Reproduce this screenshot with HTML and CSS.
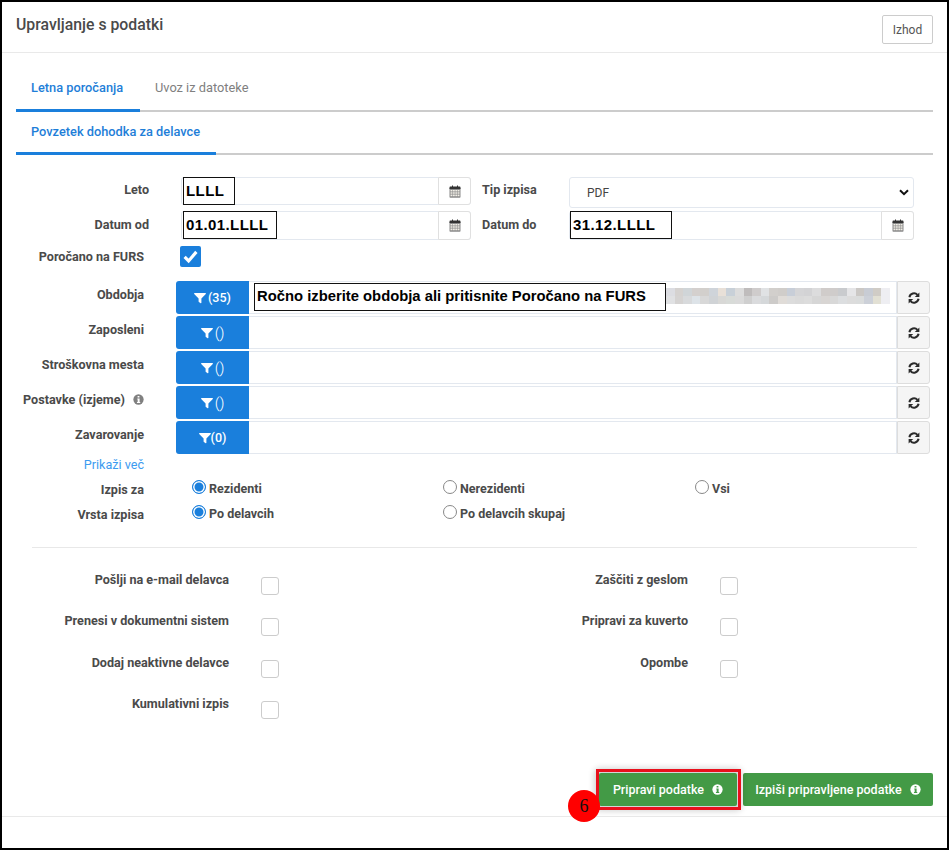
FILE: index.html
```html
<!DOCTYPE html>
<html lang="sl">
<head>
    <meta charset="UTF-8">
    <meta name="viewport" content="width=device-width, initial-scale=1.0">
    <title>Upravljanje s podatki</title>
    <link rel="stylesheet" href="styles.css">
</head>
<body>

    <svg class="icon-defs" width="0" height="0">
        <symbol id="i-cal" viewBox="0 0 12 13">
            <path d="M0.5 3h11v9a.8.8 0 0 1-.8.8H1.3a.8.8 0 0 1-.8-.8z" fill="#8a8a8a"/>
            <path d="M1.3 1.6h9.4a.8.8 0 0 1 .8.8V4H.5V2.4a.8.8 0 0 1 .8-.8z" fill="#333"/>
            <path d="M3 .4h1v2.4H3zM8 .4h1v2.4H8z" fill="#333"/>
            <path d="M1.5 5h2v1.6h-2zM4 5h1.8v1.6H4zM6.3 5h1.8v1.6H6.3zM8.6 5h1.9v1.6H8.6zM1.5 7.2h2v1.6h-2zM4 7.2h1.8v1.6H4zM6.3 7.2h1.8v1.6H6.3zM8.6 7.2h1.9v1.6H8.6zM1.5 9.4h2v1.8h-2zM4 9.4h1.8v1.8H4zM6.3 9.4h1.8v1.8H6.3zM8.6 9.4h1.9v1.8H8.6z" fill="#f1eee6"/>
        </symbol>
        <symbol id="i-filter" viewBox="0 0 12 12">
            <path d="M.6 1h10.8c.5 0 .7.5.4.9L7.4 6.4v4.4c0 .4-.4.6-.7.4L4.9 9.9a.6.6 0 0 1-.3-.5V6.4L.2 1.9C-.1 1.5.1 1 .6 1z" fill="#fff"/>
        </symbol>
        <symbol id="i-refresh" viewBox="0 0 12 12">
            <path d="M1.4 5.2A4.7 4.7 0 0 1 9.5 2.9" fill="none" stroke="#2b2b2b" stroke-width="2"/>
            <path d="M11.4 .4v4.6H6.8z" fill="#2b2b2b"/>
            <path d="M10.6 6.8A4.7 4.7 0 0 1 2.5 9.1" fill="none" stroke="#2b2b2b" stroke-width="2"/>
            <path d="M.6 11.6V7h4.6z" fill="#2b2b2b"/>
        </symbol>
        <symbol id="i-info" viewBox="0 0 12 12">
            <circle cx="6" cy="6" r="5.6" fill="currentColor"/>
            <path d="M5 2.2h2v1.7H5zM4.7 5h2.5v3.6h.7v1.1H4.3V8.6h.8V6.1h-.4z" fill="var(--info-mark, #fff)"/>
        </symbol>
    </svg>

    <div class="frame">
        <header class="head">
            <h1>Upravljanje s podatki</h1>
            <button class="btn-exit">Izhod</button>
        </header>

        <div class="content">
            <nav class="tabs">
                <a class="tab active">Letna poročanja</a>
                <a class="tab">Uvoz iz datoteke</a>
            </nav>
            <nav class="tabs sub">
                <a class="tab active">Povzetek dohodka za delavce</a>
            </nav>

            <div class="date-grid">
                <label class="lbl">Leto</label>
                <div class="field short">
                    <span class="note w52">LLLL</span>
                    <span class="addon"><svg class="ico-cal"><use href="#i-cal"/></svg></span>
                </div>
                <label class="lbl left">Tip izpisa</label>
                <div class="select">
                    <span>PDF</span>
                    <svg class="chev" viewBox="0 0 10 7"><path d="M1 1.2l4 4 4-4" fill="none" stroke="#111" stroke-width="2"/></svg>
                </div>

                <label class="lbl">Datum od</label>
                <div class="field">
                    <span class="note w94">01.01.LLLL</span>
                    <span class="addon"><svg class="ico-cal"><use href="#i-cal"/></svg></span>
                </div>
                <label class="lbl left">Datum do</label>
                <div class="field">
                    <span class="note w102">31.12.LLLL</span>
                    <span class="addon"><svg class="ico-cal"><use href="#i-cal"/></svg></span>
                </div>
            </div>

            <div class="furs-row">
                <label class="lbl">Poročano na FURS</label>
                <span class="check-on">
                    <svg viewBox="0 0 20 20"><path d="M4.4 10.4l3.8 3.8 7.4-8.6" fill="none" stroke="#fff" stroke-width="3"/></svg>
                </span>
            </div>

            <div class="filters">
                <div class="filter-row">
                    <label class="lbl">Obdobja</label>
                    <button class="btn-filter"><svg class="ico-filter"><use href="#i-filter"/></svg>(35)</button>
                    <div class="filter-input">
                        <span class="note wide">Ročno izberite obdobja ali pritisnite Poročano na FURS</span>
                        <svg class="mosaic" viewBox="0 0 26 2" preserveAspectRatio="none" shape-rendering="crispEdges">
                            <rect x="0" y="0" width="1" height="1" fill="#dcdde2"/><rect x="1" y="0" width="1" height="1" fill="#d5d2d0"/>
                            <rect x="2" y="0" width="1" height="1" fill="#d0d5d8"/><rect x="3" y="0" width="1" height="1" fill="#d4d0ce"/>
                            <rect x="4" y="0" width="1" height="1" fill="#d2cfcc"/><rect x="5" y="0" width="1" height="1" fill="#cfd4da"/>
                            <rect x="6" y="0" width="1" height="1" fill="#e8e0d8"/><rect x="7" y="0" width="1" height="1" fill="#c8d0d8"/>
                            <rect x="8" y="0" width="1" height="1" fill="#dcdcdc"/><rect x="9" y="0" width="1" height="1" fill="#bfbcbc"/>
                            <rect x="10" y="0" width="1" height="1" fill="#cfcccc"/><rect x="11" y="0" width="1" height="1" fill="#e0e2e4"/>
                            <rect x="12" y="0" width="1" height="1" fill="#d2cfcc"/><rect x="13" y="0" width="1" height="1" fill="#d0cdca"/>
                            <rect x="14" y="0" width="1" height="1" fill="#c8ced8"/><rect x="15" y="0" width="1" height="1" fill="#d5d5d7"/>
                            <rect x="16" y="0" width="1" height="1" fill="#d3d3d5"/><rect x="17" y="0" width="1" height="1" fill="#dcdcdd"/>
                            <rect x="18" y="0" width="1" height="1" fill="#d0ccca"/><rect x="19" y="0" width="1" height="1" fill="#cfcccb"/>
                            <rect x="20" y="0" width="1" height="1" fill="#c9cbce"/><rect x="21" y="0" width="1" height="1" fill="#e5e5e7"/>
                            <rect x="22" y="0" width="1" height="1" fill="#cbc8c5"/><rect x="23" y="0" width="1" height="1" fill="#c8ccd4"/>
                            <rect x="24" y="0" width="1" height="1" fill="#d0ccc6"/><rect x="25" y="0" width="1" height="1" fill="#eeeef2"/>
                            <rect x="0" y="1" width="1" height="1" fill="#e0e1e3"/><rect x="1" y="1" width="1" height="1" fill="#d5d3d2"/>
                            <rect x="2" y="1" width="1" height="1" fill="#d8dadc"/><rect x="3" y="1" width="1" height="1" fill="#dde3e8"/>
                            <rect x="4" y="1" width="1" height="1" fill="#d8d8d8"/><rect x="5" y="1" width="1" height="1" fill="#d0d3d6"/>
                            <rect x="6" y="1" width="1" height="1" fill="#d8d8d6"/><rect x="7" y="1" width="1" height="1" fill="#d8dbd8"/>
                            <rect x="8" y="1" width="1" height="1" fill="#dadada"/><rect x="9" y="1" width="1" height="1" fill="#cfcfcf"/>
                            <rect x="10" y="1" width="1" height="1" fill="#dadbdd"/><rect x="11" y="1" width="1" height="1" fill="#d5d8da"/>
                            <rect x="12" y="1" width="1" height="1" fill="#cdcbc9"/><rect x="13" y="1" width="1" height="1" fill="#e0dcd8"/>
                            <rect x="14" y="1" width="1" height="1" fill="#dcdcdc"/><rect x="15" y="1" width="1" height="1" fill="#dadada"/>
                            <rect x="16" y="1" width="1" height="1" fill="#dcdcdc"/><rect x="17" y="1" width="1" height="1" fill="#d6d6d6"/>
                            <rect x="18" y="1" width="1" height="1" fill="#d8d5d3"/><rect x="19" y="1" width="1" height="1" fill="#d8d8d8"/>
                            <rect x="20" y="1" width="1" height="1" fill="#dcdee0"/><rect x="21" y="1" width="1" height="1" fill="#dcdcdc"/>
                            <rect x="22" y="1" width="1" height="1" fill="#dadcdc"/><rect x="23" y="1" width="1" height="1" fill="#ccd0d8"/>
                            <rect x="24" y="1" width="1" height="1" fill="#e2e0d4"/><rect x="25" y="1" width="1" height="1" fill="#eeeef2"/>
                        </svg>
                    </div>
                    <button class="btn-reload"><svg class="ico-reload"><use href="#i-refresh"/></svg></button>
                </div>
                <div class="filter-row">
                    <label class="lbl">Zaposleni</label>
                    <button class="btn-filter thin"><svg class="ico-filter"><use href="#i-filter"/></svg>()</button>
                    <div class="filter-input"></div>
                    <button class="btn-reload"><svg class="ico-reload"><use href="#i-refresh"/></svg></button>
                </div>
                <div class="filter-row">
                    <label class="lbl">Stroškovna mesta</label>
                    <button class="btn-filter thin"><svg class="ico-filter"><use href="#i-filter"/></svg>()</button>
                    <div class="filter-input"></div>
                    <button class="btn-reload"><svg class="ico-reload"><use href="#i-refresh"/></svg></button>
                </div>
                <div class="filter-row">
                    <label class="lbl">Postavke (izjeme) <svg class="ico-info grey"><use href="#i-info"/></svg></label>
                    <button class="btn-filter thin"><svg class="ico-filter"><use href="#i-filter"/></svg>()</button>
                    <div class="filter-input"></div>
                    <button class="btn-reload"><svg class="ico-reload"><use href="#i-refresh"/></svg></button>
                </div>
                <div class="filter-row">
                    <label class="lbl">Zavarovanje</label>
                    <button class="btn-filter tight"><svg class="ico-filter"><use href="#i-filter"/></svg>(0)</button>
                    <div class="filter-input"></div>
                    <button class="btn-reload"><svg class="ico-reload"><use href="#i-refresh"/></svg></button>
                </div>
            </div>

            <a class="more">Prikaži več</a>

            <div class="radios">
                <div class="radio-row">
                    <label class="lbl">Izpis za</label>
                    <span class="radio"><i class="dot on"></i>Rezidenti</span>
                    <span class="radio"><i class="dot"></i>Nerezidenti</span>
                    <span class="radio"><i class="dot"></i>Vsi</span>
                </div>
                <div class="radio-row">
                    <label class="lbl">Vrsta izpisa</label>
                    <span class="radio"><i class="dot on"></i>Po delavcih</span>
                    <span class="radio"><i class="dot"></i>Po delavcih skupaj</span>
                </div>
            </div>

            <hr class="sep">

            <div class="opts">
                <div class="opt"><label>Pošlji na e-mail delavca</label><i class="box"></i></div>
                <div class="opt"><label>Zaščiti z geslom</label><i class="box"></i></div>
                <div class="opt"><label>Prenesi v dokumentni sistem</label><i class="box"></i></div>
                <div class="opt"><label>Pripravi za kuverto</label><i class="box"></i></div>
                <div class="opt"><label>Dodaj neaktivne delavce</label><i class="box"></i></div>
                <div class="opt"><label>Opombe</label><i class="box"></i></div>
                <div class="opt"><label>Kumulativni izpis</label><i class="box"></i></div>
            </div>

            <div class="actions">
                <button class="btn-green marked">Pripravi podatke <svg class="ico-info"><use href="#i-info"/></svg><span class="step">6</span></button>
                <button class="btn-green wide">Izpiši pripravljene podatke <svg class="ico-info"><use href="#i-info"/></svg></button>
            </div>
        </div>

        <footer class="foot"></footer>
    </div>

</body>
</html>
```

FILE: styles.css
```css
* { box-sizing: border-box; }
html, body { margin: 0; padding: 0; background: #fff; }
body { font-family: Roboto, "Liberation Sans", sans-serif; color: #444; }
button { font-family: inherit; cursor: pointer; }
.icon-defs { position: absolute; }

.frame { width: 949px; height: 850px; border: 2px solid #000; display: flex; flex-direction: column; overflow: hidden; }

/* header */
.head { height: 51px; flex: none; border-bottom: 1px solid #e9e9e9; padding: 13px 14px 0 14px; display: flex; justify-content: space-between; align-items: flex-start; }
.head h1 { margin: 0; font-size: 15.8px; line-height: 20px; font-weight: 500; color: #4a4a4a; }
.btn-exit { width: 51px; height: 29px; background: #fff; border: 1px solid #ccc; border-radius: 2px; font-size: 12px; color: #555; padding: 0; }

/* tabs */
.content { flex: 1; padding: 0 14px; position: relative; }
.tabs { height: 59px; display: flex; border-bottom: 2px solid #ccc; padding-top: 24px; }
.tabs.sub { height: 43px; padding-top: 9px; }
.tab { font-size: 12.8px; font-weight: 400; color: #808080; padding: 0 15px; height: 35px; line-height: 22px; margin-bottom: -2px; white-space: nowrap; }
.tab.active { font-weight: 500; color: #1e7ed8; border-bottom: 3px solid #1a7fdc; width: 124px; padding-right: 0; }
.tabs.sub .tab { height: 34px; }
.tabs.sub .tab.active { width: 200px; }

/* labels */
.lbl { font-size: 12.6px; font-weight: 700; line-height: 16px; color: #4a4a4a; text-align: right; white-space: nowrap; }
.lbl.left { text-align: left; padding-left: 11px; }

/* dates */
.date-grid { margin-top: 22px; display: grid; grid-template-columns: 133px 322px 98px 345px; grid-template-rows: 34px 29px; }
.date-grid > .lbl { padding-top: 5px; }
.date-grid > .lbl:nth-child(n+5) { padding-top: 6px; }
.date-grid .field:nth-child(2), .date-grid .field:nth-child(6) { margin-left: 32px; width: 290px; }
.field { height: 29px; display: flex; justify-content: space-between; border: 1px solid #e3e8ef; border-radius: 3px; background: #fff; }
.field.short { height: 28px; }
.addon { width: 33px; margin: -1px; border: 1px solid #e0e0e0; border-radius: 0 3px 3px 0; background: #fff; display: flex; align-items: center; justify-content: center; }
.ico-cal { width: 12px; height: 13px; }
.select { height: 31px; border: 1px solid #e3e8ef; border-radius: 3px; display: flex; align-items: center; justify-content: space-between; padding: 0 4px 0 17px; font-size: 12px; color: #444; }
.chev { width: 10px; height: 7px; }

/* black callouts typed over the screenshot */
.note { border: 1.5px solid #111; background: #fff; color: #000; font-family: "Liberation Sans", Arial, sans-serif; font-weight: 700; font-size: 15px; line-height: 25px; padding-left: 2px; height: 28px; white-space: nowrap; margin: -1px 0 -1px 1px; letter-spacing: .4px; }
.w52 { width: 52px; }
.w94 { width: 94px; }
.w102 { width: 102px; margin-left: 0; }
.note.wide { width: 412px; margin: 1px 0 0 5px; letter-spacing: 0; font-size: 14.8px; }

/* FURS */
.furs-row { display: flex; height: 33px; margin-top: 6px; }
.furs-row .lbl { width: 128px; padding-top: 3px; }
.check-on { width: 21px; height: 21px; margin-left: 36px; background: #1a7fdc; border-radius: 2px; display: block; }
.check-on svg { display: block; width: 21px; height: 21px; }

/* filter rows */
.filters { margin-top: 2px; display: flex; flex-direction: column; gap: 3px; }
.filter-row { display: grid; grid-template-columns: 160px 73px 648px 33px; height: 32px; }
.filter-row > .lbl { padding: 6px 32px 0 0; }
.btn-filter { height: 33px; border: 0; background: #1a7fdc; border-radius: 3px 0 0 3px; color: #fff; font-size: 12.5px; font-weight: 500; padding: 0; display: flex; align-items: center; justify-content: center; gap: 2px; }
.btn-filter.thin { font-size: 15px; font-weight: 300; }
.btn-filter.tight { gap: 0; }
.ico-filter { width: 12px; height: 12px; }
.filter-input { height: 33px; border: 1px solid #e3e8ef; border-left: 0; display: flex; align-items: flex-start; background: #fff; }
.mosaic { width: 224px; height: 16px; margin-top: 6px; flex: none; }
.btn-reload { width: 33px; height: 33px; background: #f5f5f5; border: 1px solid #ddd; border-radius: 0 3px 3px 0; padding: 0; display: flex; align-items: center; justify-content: center; }
.ico-reload { width: 12px; height: 12px; }
.ico-info { width: 11px; height: 11px; color: #fff; --info-mark: #439a46; vertical-align: -1px; margin-left: 5px; }
.ico-info.grey { color: #808080; --info-mark: #fff; }

.more { display: block; width: 128px; text-align: right; font-size: 12.6px; color: #3d9bf0; line-height: 16px; margin-top: 4px; }

/* radios */
.radios { margin-top: 2px; }
.radio-row { display: grid; grid-template-columns: 128px 299px 252px 1fr; height: 25px; }
.radio-row .lbl { padding-top: 7px; }
.radio { font-size: 12.5px; font-weight: 700; color: #4a4a4a; display: flex; align-items: center; padding-left: 48px; gap: 3px; height: 25px; white-space: nowrap; padding-top: 2px; }
.radio + .radio { padding-left: 0; }
.dot { width: 14px; height: 14px; border-radius: 50%; border: 1px solid #888; background: #fff; display: inline-block; margin-top: -4px; }
.dot.on { border: 1.5px solid #1a7fdc; box-shadow: inset 0 0 0 1.5px #fff; background: #1a7fdc; }

.sep { border: 0; border-top: 1px solid #e8e8e8; margin: 22px 16px 0 16px; width: 885px; }

/* options */
.opts { margin-top: 29px; display: grid; grid-template-columns: 459px 1fr; row-gap: 23.4px; }
.opt { display: flex; height: 18px; }
.opt label { width: 213px; text-align: right; font-size: 12.6px; font-weight: 700; color: #4a4a4a; line-height: 16px; margin-top: -5px; white-space: nowrap; }
.box { width: 18px; height: 18px; margin-left: 32px; border: 1px solid #ccc; border-radius: 3px; background: #fff; display: block; }

/* action buttons */
.actions { position: absolute; right: 14px; top: 720px; display: flex; gap: 6px; }
.btn-green { height: 33px; border: 0; background: #439a46; border-radius: 2px; color: #fff; font-size: 12.5px; font-weight: 500; padding: 0; white-space: nowrap; }
.btn-green.wide { width: 190px; }
.btn-green.marked { width: 138px; position: relative; box-shadow: 0 0 6px 5px rgba(0,0,0,.18); }
.btn-green.marked::after { content: ""; position: absolute; left: -3px; top: -4px; right: -4px; bottom: -4px; border: 3px solid #e8101c; }
.step { position: absolute; left: -31px; top: 17px; width: 32px; height: 32px; border-radius: 50%; background: #f00; color: #111; font-family: "Liberation Serif", serif; font-size: 18px; font-weight: 400; line-height: 32px; text-align: center; z-index: 1; }

.foot { height: 32px; flex: none; border-top: 1px solid #e9e9e9; }
```
